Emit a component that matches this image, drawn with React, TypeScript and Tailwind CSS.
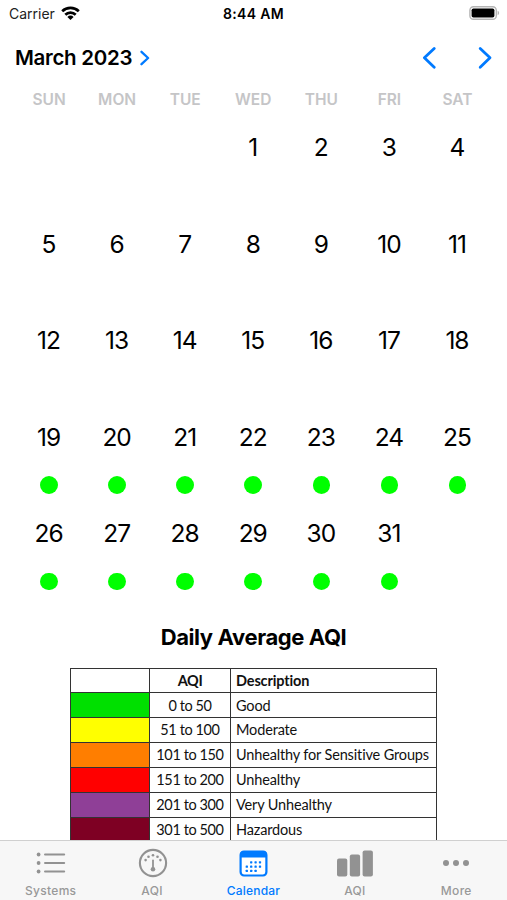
import clsx from "clsx";
import type { ReactNode } from "react";

const WEEKDAYS = ["SUN", "MON", "TUE", "WED", "THU", "FRI", "SAT"];

// March 2023 starts on a Wednesday
const FIRST_WEEKDAY = 3;
const DAYS_IN_MONTH = 31;
const FIRST_READING = 19;

const LEVELS = [
    { color: "bg-[#00e000]", range: "0 to 50", description: "Good" },
    { color: "bg-[#ffff00]", range: "51 to 100", description: "Moderate" },
    { color: "bg-[#ff7e00]", range: "101 to 150", description: "Unhealthy for Sensitive Groups" },
    { color: "bg-[#ff0000]", range: "151 to 200", description: "Unhealthy" },
    { color: "bg-[#8f3f97]", range: "201 to 300", description: "Very Unhealthy" },
    { color: "bg-[#7e0023]", range: "301 to 500", description: "Hazardous" },
];

function StatusBar() {
    return (
        <div className="grid h-7 shrink-0 grid-cols-3 items-center pb-[2px] pl-[9px] pr-[7px] text-[14px]">
            <div className="flex items-center gap-[6px] text-[#222]">
                <span>Carrier</span>
                <svg className="-mt-[1px]" width="19" height="14" viewBox="0 0 19 14" fill="none" stroke="#000" strokeWidth="2.7">
                    <path d="M1.2 5.3a11.9 11.9 0 0 1 16.6 0" />
                    <path d="M4.3 8.7a7.4 7.4 0 0 1 10.4 0" />
                    <path d="M9.5 14 6.4 10.9a4.4 4.4 0 0 1 6.2 0Z" fill="#000" stroke="none" />
                </svg>
            </div>
            <div className="pr-[2px] text-center font-semibold tracking-[0.3px]">8:44 AM</div>
            <svg className="justify-self-end" width="31" height="14" viewBox="0 0 31 14">
                <rect x="0.9" y="0.7" width="26.4" height="12.6" rx="3.6" fill="#fff" stroke="#b5b5b5" strokeWidth="1.4" />
                <rect x="2.6" y="2.4" width="22.8" height="9.2" rx="1.8" />
                <path d="M28.6 4.8c2 .7 2 3.7 0 4.4Z" fill="#b5b5b5" />
            </svg>
        </div>
    );
}

function MonthHeader() {
    return (
        <div className="flex h-[59px] shrink-0 items-center justify-between pl-[15px] pr-[15px]">
            <div className="flex items-center gap-[8px]">
                <h1 className="text-[20.5px] font-semibold leading-7 tracking-[-0.3px]">March 2023</h1>
                <svg width="10" height="16" viewBox="0 0 10 16" fill="none" stroke="#007aff" strokeWidth="2.3" strokeLinecap="round" strokeLinejoin="round">
                    <path d="m1.5 1.8 6.6 6.2-6.6 6.2" />
                </svg>
            </div>
            <div className="flex gap-[41px]">
                <svg width="15" height="24" viewBox="0 0 15 24" fill="none" stroke="#007aff" strokeWidth="2.8" strokeLinecap="round" strokeLinejoin="round">
                    <path d="M13.2 2.4 3.4 11.8l9.8 9.4" />
                </svg>
                <svg width="15" height="24" viewBox="0 0 15 24" fill="none" stroke="#007aff" strokeWidth="2.8" strokeLinecap="round" strokeLinejoin="round">
                    <path d="m3.2 2.4 9.8 9.4-9.8 9.4" />
                </svg>
            </div>
        </div>
    );
}

function Calendar() {
    const blanks = Array.from({ length: FIRST_WEEKDAY }, (_, i) => i);
    const days = Array.from({ length: DAYS_IN_MONTH }, (_, i) => i + 1);

    return (
        <div className="shrink-0 pl-[15px] pr-[15.5px]">
            <div className="grid h-[25px] grid-cols-7 items-center text-center text-[15.5px] font-semibold text-[#c5c5c7]">
                {WEEKDAYS.map((name) => (
                    <span key={name}>{name}</span>
                ))}
            </div>
            <div className="grid auto-rows-[96.5px] grid-cols-7 pt-[9px]">
                {blanks.map((i) => (
                    <div key={`blank-${i}`} />
                ))}
                {days.map((day) => (
                    <div key={day} className="flex flex-col items-center">
                        <span className="pr-[1px] text-[24.5px] leading-[52px] tracking-[-1px]">{day}</span>
                        {day >= FIRST_READING && (
                            <span className="mt-[13.5px] size-[17.5px] rounded-full bg-[#00ff00]" />
                        )}
                    </div>
                ))}
            </div>
        </div>
    );
}

function AqiTable() {
    return (
        <table className="ml-[70px] mt-[16px] w-[367px] table-fixed border-collapse font-[Lato,sans-serif] text-[14.5px] leading-none text-[#111]">
            <colgroup>
                <col className="w-[79px]" />
                <col className="w-[81px]" />
                <col />
            </colgroup>
            <thead>
                <tr className="h-[24.9px] font-bold">
                    <th className="border border-[#333]" />
                    <th className="border border-[#333] pt-[1px] tracking-[-0.4px]">AQI</th>
                    <th className="border border-[#333] pl-[5px] pt-[1px] text-left tracking-[-0.15px]">Description</th>
                </tr>
            </thead>
            <tbody>
                {LEVELS.map((level) => (
                    <tr key={level.range} className="h-[24.9px]">
                        <td className={clsx("border border-[#333]", level.color)} />
                        <td className="border border-[#333] pt-[1px] text-center tracking-[-0.4px] whitespace-nowrap">{level.range}</td>
                        <td className="border border-[#333] pl-[5px] pt-[1px] tracking-[-0.15px] whitespace-nowrap">{level.description}</td>
                    </tr>
                ))}
            </tbody>
        </table>
    );
}

function ListIcon() {
    return (
        <svg width="30" height="26" viewBox="0 0 30 26" fill="#929292">
            {[4.5, 13, 21.5].map((y) => (
                <g key={y}>
                    <circle cx="2.6" cy={y} r="1.9" />
                    <rect x="8" y={y - 1.1} width="21.2" height="2.2" rx="1.1" />
                </g>
            ))}
        </svg>
    );
}

function GaugeIcon() {
    return (
        <svg className="ml-[1px]" width="30" height="30" viewBox="0 0 30 30" fill="#929292">
            <circle cx="15" cy="15" r="13.1" fill="none" stroke="#929292" strokeWidth="2.1" />
            <circle cx="7.6" cy="12.1" r="1.3" />
            <circle cx="10.5" cy="8.7" r="1.3" />
            <circle cx="15" cy="7.2" r="1.3" />
            <circle cx="19.5" cy="8.7" r="1.3" />
            <circle cx="22.4" cy="12.1" r="1.3" />
            <rect x="14.1" y="11.4" width="1.8" height="9" rx="0.9" />
            <circle cx="15" cy="21.2" r="2.3" />
        </svg>
    );
}

function CalendarIcon() {
    const dots = [
        [12.2, 12.3], [16.6, 12.3], [21, 12.3],
        [7.8, 16.6], [12.2, 16.6], [16.6, 16.6], [21, 16.6],
        [7.8, 20.9], [12.2, 20.9], [16.6, 20.9],
    ];
    return (
        <svg width="29" height="27" viewBox="0 0 29 27" fill="#007aff">
            <rect x="1.6" y="1.5" width="25.8" height="24" rx="3.4" fill="#fff" stroke="#007aff" strokeWidth="2.2" />
            <path d="M1 7.6V4.6Q1 1 4.6 1h19.8Q28 1 28 4.6V7.6Z" />
            {dots.map(([x, y]) => (
                <rect key={`${x}-${y}`} x={x - 1.15} y={y - 1.15} width="2.3" height="2.3" rx="0.6" />
            ))}
        </svg>
    );
}

function BarsIcon() {
    return (
        <svg width="36" height="27" viewBox="0 0 36 27" fill="#929292">
            <rect x="0" y="8.5" width="10.3" height="18" rx="2" />
            <rect x="12.8" y="4.5" width="10.3" height="22" rx="2" />
            <rect x="25.6" y="0.5" width="10.3" height="26" rx="2" />
        </svg>
    );
}

function MoreIcon() {
    return (
        <svg width="28" height="8" viewBox="0 0 28 8" fill="#929292">
            <circle cx="4" cy="4" r="3" />
            <circle cx="14" cy="4" r="3" />
            <circle cx="24" cy="4" r="3" />
        </svg>
    );
}

interface TabProps {
    label: string;
    active?: boolean;
    children: ReactNode;
}

function Tab({ label, active, children }: TabProps) {
    return (
        <button
            className={clsx(
                "flex flex-col items-center text-[12px] font-medium leading-4",
                active ? "tracking-[0.2px] text-[#007aff]" : "tracking-[0.3px] text-[#999]"
            )}
        >
            <span className="flex h-[42px] items-center justify-center pt-[2px]">{children}</span>
            {label}
        </button>
    );
}

export default function App() {
    return (
        <div className="flex h-[900px] w-[507px] flex-col overflow-hidden bg-white font-[Inter,sans-serif] text-black">
            <main className="flex min-h-0 flex-1 flex-col overflow-hidden">
                <StatusBar />
                <MonthHeader />
                <Calendar />
                <h2 className="mt-[18px] shrink-0 text-center text-[22px] font-bold leading-[30px] tracking-[-0.4px]">
                    Daily Average AQI
                </h2>
                <AqiTable />
            </main>
            <nav className="grid h-[60px] shrink-0 grid-cols-5 border-t border-[#d0d0d0] bg-[#f7f7f7]">
                <Tab label="Systems"><ListIcon /></Tab>
                <Tab label="AQI"><GaugeIcon /></Tab>
                <Tab label="Calendar" active><CalendarIcon /></Tab>
                <Tab label="AQI"><BarsIcon /></Tab>
                <Tab label="More"><MoreIcon /></Tab>
            </nav>
        </div>
    );
}
